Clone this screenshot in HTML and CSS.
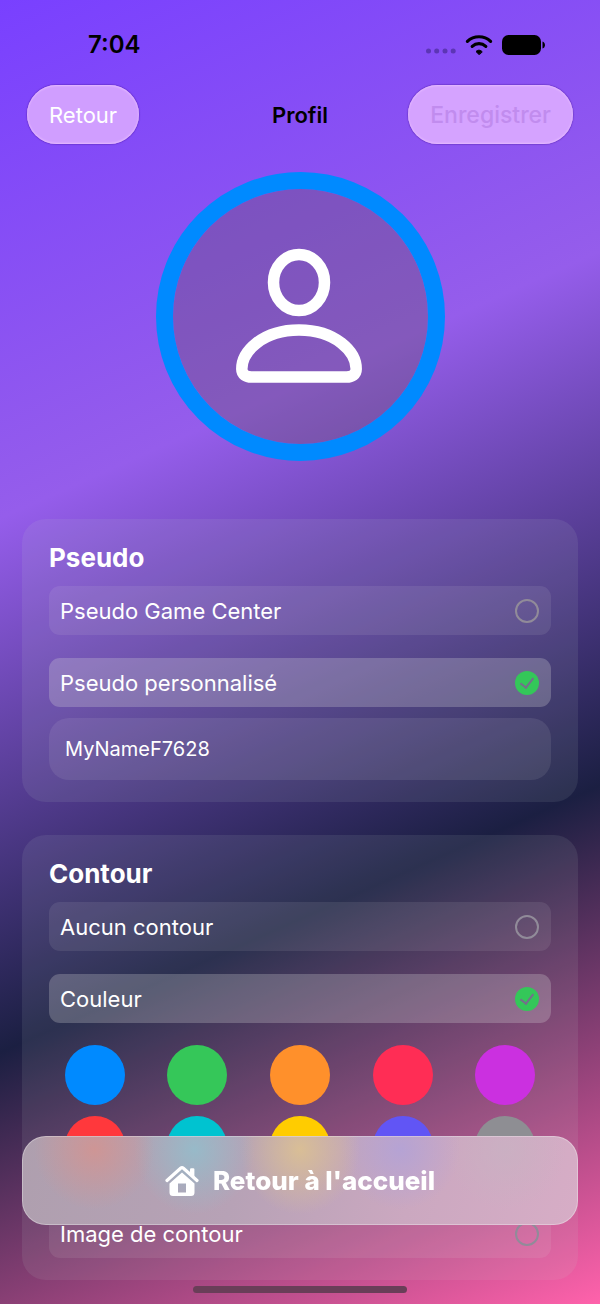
FILE: index.html
```html
<!DOCTYPE html>
<html lang="fr">
<head>
<meta charset="utf-8">
<meta name="viewport" content="width=device-width, initial-scale=1">
<title>Profil</title>
<link rel="stylesheet" href="styles.css">
</head>
<body>
<div class="screen">
  <div class="status">
    <time class="status-time">7:04</time>
    <div class="status-icons">
      <svg width="30" height="20" viewBox="0 0 30 20" fill="#5c35b5" aria-hidden="true"><circle cx="2.500" cy="16" r="2.500"/><circle cx="10.700" cy="16" r="2.500"/><circle cx="19" cy="16" r="2.500"/><circle cx="27.200" cy="16" r="2.500"/></svg>
      <svg width="28" height="20" viewBox="0 0 28 20" fill="none" stroke="#000" stroke-width="3.200" stroke-linecap="round" aria-hidden="true"><path d="M2.400 6.300C8.800 .2 19.200 .2 25.600 6.300"/><path d="M7.200 11.400C11.200 7.800 16.800 7.800 20.800 11.400"/><path d="M14 19.500l-3-2.900c1.600-1.900 4.400-1.900 6 0z" fill="#000" stroke-width="1" stroke-linejoin="round"/></svg>
      <svg width="43" height="20" viewBox="0 0 43 20" aria-hidden="true"><rect width="39" height="20" rx="6.500"/><path d="M40.500 6.500c3.300 1 3.300 6 0 7z"/></svg>
    </div>
  </div>

  <header class="nav">
    <button class="pill" type="button">Retour</button>
    <h1 class="nav-title">Profil</h1>
    <button class="pill pill-save" type="button" disabled>Enregistrer</button>
  </header>

  <main class="content">
    <div class="avatar">
      <svg width="128" height="138" viewBox="1 0 128 138" fill="none" stroke="#fff" stroke-width="11.500" aria-hidden="true"><ellipse cx="64" cy="34.500" rx="25.500" ry="28"/><path d="M16.500 129H111.500C117 129 121.200 126.500 121.200 121C121.200 104 101 82 64 82S6.800 104 6.800 121C6.800 126.500 11 129 16.500 129Z"/></svg>
    </div>

    <section class="card">
      <h2 class="card-title">Pseudo</h2>
      <div class="options">
        <label class="option"><span>Pseudo Game Center</span><input class="radio" type="radio" name="pseudo"></label>
        <label class="option option-on"><span>Pseudo personnalisé</span><input class="radio" type="radio" name="pseudo" checked></label>
      </div>
      <input class="name-field" type="text" value="MyNameF7628" aria-label="Pseudo personnalisé">
    </section>

    <section class="card">
      <h2 class="card-title">Contour</h2>
      <div class="options">
        <label class="option"><span>Aucun contour</span><input class="radio" type="radio" name="contour"></label>
        <label class="option option-on"><span>Couleur</span><input class="radio" type="radio" name="contour" checked></label>
      </div>
      <div class="swatches">
        <button class="swatch blue" type="button" aria-label="Bleu"></button>
        <button class="swatch green" type="button" aria-label="Vert"></button>
        <button class="swatch orange" type="button" aria-label="Orange"></button>
        <button class="swatch pink" type="button" aria-label="Rose"></button>
        <button class="swatch purple" type="button" aria-label="Violet"></button>
        <button class="swatch red" type="button" aria-label="Rouge"></button>
        <button class="swatch teal" type="button" aria-label="Turquoise"></button>
        <button class="swatch yellow" type="button" aria-label="Jaune"></button>
        <button class="swatch indigo" type="button" aria-label="Indigo"></button>
        <button class="swatch gray" type="button" aria-label="Gris"></button>
      </div>
      <label class="option"><span>Image de contour</span><input class="radio" type="radio" name="contour"></label>
    </section>
  </main>

  <button class="home" type="button">
    <svg width="34" height="32" viewBox="0 0 34 32" aria-hidden="true"><path d="M2 15.500L15.600 3.300Q17 2.100 18.400 3.300L32 15.500" fill="none" stroke="#fff" stroke-width="3.200" stroke-linecap="round" stroke-linejoin="round"/><path d="M25 4.500q0-1.200 1.200-1.200h2q1.200 0 1.200 1.200v8l-4.400-4z" fill="#fff"/><path fill="#fff" fill-rule="evenodd" d="M17 7.500L29.500 18.600V27.500Q29.500 31 26 31H8Q4.500 31 4.500 27.500V18.600ZM13 18.500V27.500H21V18.500Z"/></svg>
    <span>Retour à l'accueil</span>
  </button>
  <div class="indicator"></div>
</div>
</body>
</html>
```
FILE: styles.css
```css
* {
  box-sizing: border-box;
}

body {
  margin: 0;
  font-family: Inter, "Liberation Sans", sans-serif;
  color: #fff;
}

button,
input {
  margin: 0;
  font: inherit;
  color: inherit;
}

.screen {
  min-height: 100vh;
  padding-bottom: 24px;
  background: linear-gradient(156deg, #7940ff 0%, #955deb 33%, #1b1f42 67%, #ff62ab 100%);
}

.status {
  display: flex;
  justify-content: space-between;
  align-items: center;
  height: 85px;
  padding: 4px 55px 0 88px;
}

.status-time {
  color: #000;
  font-size: 24px;
  font-weight: 600;
}

.status-icons {
  display: flex;
  align-items: center;
  gap: 9px;
}

.nav {
  display: grid;
  grid-template-columns: 1fr auto 1fr;
  align-items: center;
  padding: 0 27px;
}

.nav-title {
  margin: 0;
  color: #000;
  font-size: 22px;
  font-weight: 600;
}

.pill {
  justify-self: start;
  height: 59px;
  padding: 0 22px;
  border: 0;
  border-radius: 30px;
  background: #d09eff;
  box-shadow: 0 0 1px 1px rgba(70, 20, 150, 0.3), inset 0 1px 2px #e6baff, inset 0 -1px 2px #e6baff;
  font-size: 22px;
}

.pill-save {
  justify-self: end;
  background: #d5a3ff;
  color: #c18cee;
  font-size: 23px;
  font-weight: 500;
}

.content {
  display: flex;
  flex-direction: column;
  gap: 33px;
  padding: 28px 22px 0;
}

.avatar {
  display: flex;
  align-items: center;
  justify-content: center;
  align-self: center;
  width: 289px;
  height: 289px;
  margin-bottom: 25px;
  border: 17px solid #008aff;
  border-radius: 50%;
  background: rgba(100, 82, 100, 0.35) padding-box;
}

.card {
  display: flex;
  flex-direction: column;
  padding: 22px 27px;
  border-radius: 24px;
  background: rgba(200, 220, 210, 0.1);
}

.card-title {
  margin: 0 0 11px;
  font-size: 26px;
  font-weight: 700;
  line-height: 34px;
}

.options {
  display: flex;
  flex-direction: column;
  gap: 23px;
}

.option {
  display: flex;
  align-items: center;
  justify-content: space-between;
  height: 49px;
  padding: 0 12px 0 11px;
  border-radius: 11px;
  background: rgba(225, 225, 225, 0.1);
  font-size: 22px;
}

.option-on {
  background: rgba(220, 220, 220, 0.26);
}

.radio {
  display: grid;
  place-items: center;
  appearance: none;
  width: 24px;
  height: 24px;
  border: 2px solid #918b99;
  border-radius: 50%;
}

.radio:checked {
  border: 0;
  background: #34c759;
}

.radio:checked::after {
  content: "";
  width: 6px;
  height: 11px;
  margin-bottom: 2px;
  border: solid #756f8c;
  border-width: 0 2px 2px 0;
  transform: rotate(38deg);
}

.name-field {
  width: 100%;
  height: 62px;
  margin-top: 11px;
  padding: 0 16px;
  border: 0;
  border-radius: 20px;
  outline: 0;
  background: rgba(225, 225, 225, 0.1);
  font-size: 20px;
}

.swatches {
  display: grid;
  grid-template-columns: repeat(5, 1fr);
  gap: 11px;
  justify-items: center;
  margin: 22px 0 33px;
}

.swatch {
  width: 60px;
  height: 60px;
  padding: 0;
  border: 0;
  border-radius: 50%;
}

.blue { background: #008aff; }
.green { background: #35c759; }
.orange { background: #ff902b; }
.pink { background: #ff2d55; }
.purple { background: #cb30e0; }
.red { background: #ff383c; }
.teal { background: #00c3d0; }
.yellow { background: #ffcc00; }
.indigo { background: #6155f5; }
.gray { background: #8e8e93; }

.home {
  position: fixed;
  right: 22px;
  bottom: 79px;
  left: 22px;
  display: flex;
  align-items: center;
  justify-content: center;
  gap: 14px;
  height: 89px;
  border: 1px solid rgba(255, 255, 255, 0.3);
  border-radius: 24px;
  background:
    radial-gradient(60px 60px at 13% 15%, rgba(216, 146, 140, 0.75), rgba(216, 146, 140, 0)),
    radial-gradient(60px 65px at 31% 15%, rgba(146, 190, 204, 0.85), rgba(146, 190, 204, 0)),
    radial-gradient(60px 65px at 50% 15%, rgba(220, 193, 146, 0.9), rgba(220, 193, 146, 0)),
    radial-gradient(60px 60px at 68% 15%, rgba(178, 162, 216, 0.85), rgba(178, 162, 216, 0)),
    radial-gradient(60px 60px at 87% 15%, rgba(200, 178, 194, 0.7), rgba(200, 178, 194, 0)),
    linear-gradient(110deg, #ae9fae 0%, #b7a2b6 40%, #cba8c0 70%, #d7adc6 100%);
  background-origin: border-box;
  font-size: 26px;
  font-weight: 800;
}

.indicator {
  position: fixed;
  bottom: 11px;
  left: 50%;
  width: 214px;
  height: 7px;
  border-radius: 4px;
  background: #693e58;
  transform: translateX(-50%);
}
```
